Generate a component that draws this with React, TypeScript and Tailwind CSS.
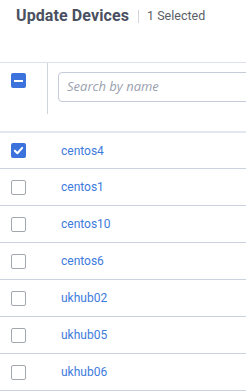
import React from 'react';

const devices = ['centos4', 'centos1', 'centos10', 'centos6', 'ukhub02', 'ukhub05', 'ukhub06'];

const Box = ({ checked }: { checked?: boolean }) =>
  checked ? (
    <span className="w-[15px] h-[15px] rounded-[2px] bg-[#3b72dc] flex items-center justify-center">
      <svg width="11" height="11" viewBox="0 0 12 12">
        <path d="M2 6.2 L4.8 9 L10 3.2" fill="none" stroke="#fff" strokeWidth="2.2" strokeLinecap="round" strokeLinejoin="round" />
      </svg>
    </span>
  ) : (
    <span className="w-[15px] h-[15px] rounded-[2px] border border-[#a3a7ae] bg-white" />
  );

export default function App() {
  return (
    <div className="w-[246px] h-[392px] overflow-hidden bg-white font-['Roboto',sans-serif]">
      <div className="h-[62px] pl-[16px] pt-[4px] flex items-start">
        <div className="flex items-center h-[24px]">
          <span className="text-[16px] font-bold text-[#4a5061] tracking-[0.1px]">Update Devices</span>
          <span className="w-px h-[13px] bg-[#d3d6dc] ml-[9px] mr-[8px]" />
          <span className="text-[12.5px] text-[#5a5e66]">1 Selected</span>
        </div>
      </div>
      <div className="border-t border-[#dde1e8] border-b-2 border-b-[#e2e6ee] h-[71px] flex">
        <div className="w-[48px] h-[51px] border-r border-[#cfd4dd] pl-[11px] pt-[10px] shrink-0">
          <span className="w-[15px] h-[15px] rounded-[2px] bg-[#3b72dc] flex items-center justify-center">
            <span className="w-[9px] h-[2px] bg-white" />
          </span>
        </div>
        <div className="pl-[10px] pt-[9px] flex-1 min-w-0">
          <div className="w-[220px] h-[30px] border border-[#c5cbd8] rounded-[4px] flex items-center pl-[8px]">
            <span className="text-[13px] italic text-[#9ba1ae] font-['Open_Sans',sans-serif]">Search by name</span>
          </div>
        </div>
      </div>
      {devices.map((d, i) => (
        <div key={d} className={`${i === 0 ? 'h-[36px]' : 'h-[37px]'} border-b border-[#cbd2e0] flex items-center`}>
          <div className="w-[61px] pl-[11px] shrink-0 flex">
            <Box checked={i === 0} />
          </div>
          <span className="text-[12px] text-[#3d7bdc]">{d}</span>
        </div>
      ))}
    </div>
  );
}
